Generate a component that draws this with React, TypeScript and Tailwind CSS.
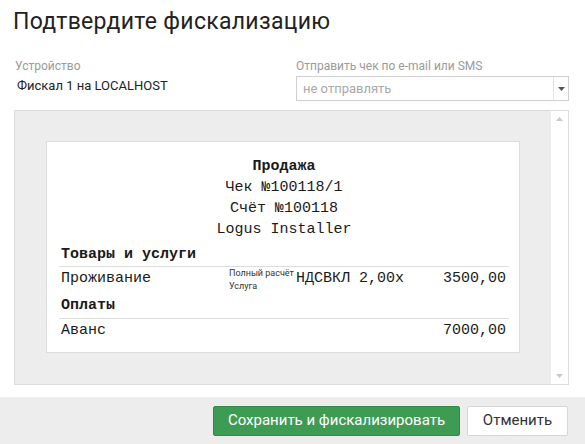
const ui = { fontFamily: 'Roboto, "Noto Sans", sans-serif' };
const mono = { fontFamily: '"Liberation Mono", "Courier New", monospace' };

function Caret({ up }: { up?: boolean }) {
  return (
    <svg width="7" height="4" viewBox="0 0 7 4" className={up ? 'rotate-180' : ''}>
      <path d="M0 0h7L3.5 4z" fill="currentColor" />
    </svg>
  );
}

function Receipt() {
  return (
    <div className="w-[474px] border border-[#dcdcdc] bg-white pb-[11px] pl-[12px] pr-[10px] pt-[14px] text-[15px] text-[#1a1a1a]" style={mono}>
      <div className="text-center">
        <div className="h-[21px] font-bold leading-[21px]">Продажа</div>
        <div className="h-[21px] leading-[21px]">Чек №100118/1</div>
        <div className="h-[21px] leading-[21px]">Счёт №100118</div>
        <div className="h-[21px] leading-[21px]">Logus Installer</div>
      </div>

      <div className="mt-[4px] h-[21px] pl-[2px] font-bold leading-[21px]">Товары и услуги</div>
      <div className="mt-[1px] border-t border-[#dcdcdc]" />
      <div className="flex h-[26px] items-start pl-[2px]">
        <div className="mt-[2px] w-[168px] leading-[19px]">Проживание</div>
        <div className="w-[67px] text-[9px] leading-[13px] text-[#333]" style={ui}>
          <div>Полный расчёт</div>
          <div>Услуга</div>
        </div>
        <div className="mt-[2px] leading-[19px]">НДСВКЛ 2,00x</div>
        <div className="mt-[2px] flex-1 pr-[3px] text-right leading-[19px]">3500,00</div>
      </div>

      <div className="mt-[2px] h-[21px] pl-[2px] font-bold leading-[21px]">Оплаты</div>
      <div className="mt-[2px] border-t border-[#dcdcdc]" />
      <div className="flex h-[22px] pl-[2px] pt-[2px] leading-[20px]">
        <div className="flex-1">Аванс</div>
        <div className="pr-[3px]">7000,00</div>
      </div>
    </div>
  );
}

export default function App() {
  return (
    <div className="flex h-[444px] w-[585px] flex-col overflow-hidden bg-white text-[#222]" style={ui}>
      <h1 className="h-[46px] pl-[13px] pt-[7px] text-[23px] leading-[30px] tracking-[0.3px]">Подтвердите фискализацию</h1>

      <div className="flex h-[64px] pt-[12px]">
        <div className="w-[296px] pl-[15px]">
          <div className="h-[16px] text-[12px] leading-[16px] text-[#9a9a9a]">Устройство</div>
          <div className="mt-[2px] pl-[2px] text-[13px] leading-[20px]">Фискал 1 на LOCALHOST</div>
        </div>
        <div className="w-[273px]">
          <div className="h-[16px] text-[12px] leading-[16px] text-[#9a9a9a]">Отправить чек по e-mail или SMS</div>
          <div className="mt-[2px] flex h-[25px] border border-[#cfcfcf]">
            <div className="flex-1 pl-[6px] text-[13px] leading-[23px] text-[#a8a8a8]">не отправлять</div>
            <div className="flex w-[15px] items-center justify-center border-l border-[#e2e2e2] text-[#555]">
              <Caret />
            </div>
          </div>
        </div>
      </div>

      <div className="mx-[14px] flex h-[275px] w-[555px] border border-[#dcdcdc] bg-[#ededed]">
        <div className="flex-1 pl-[31px] pt-[30px]">
          <Receipt />
        </div>
        <div className="flex w-[17px] flex-col items-center justify-between bg-white py-[6px] text-[#c8c8c8]">
          <Caret up />
          <Caret />
        </div>
      </div>

      <div className="mt-auto flex h-[47px] items-center justify-end gap-[7px] bg-[#ededed] pr-[17px]">
        <button className="h-[30px] w-[247px] rounded-[2px] border border-[#2f8a45] bg-[#3e9b54] text-[15px] text-white">
          Сохранить и фискализировать
        </button>
        <button className="h-[30px] w-[101px] rounded-[2px] border border-[#d6d6d6] bg-white text-[15px] text-[#333]">
          Отменить
        </button>
      </div>
    </div>
  );
}
